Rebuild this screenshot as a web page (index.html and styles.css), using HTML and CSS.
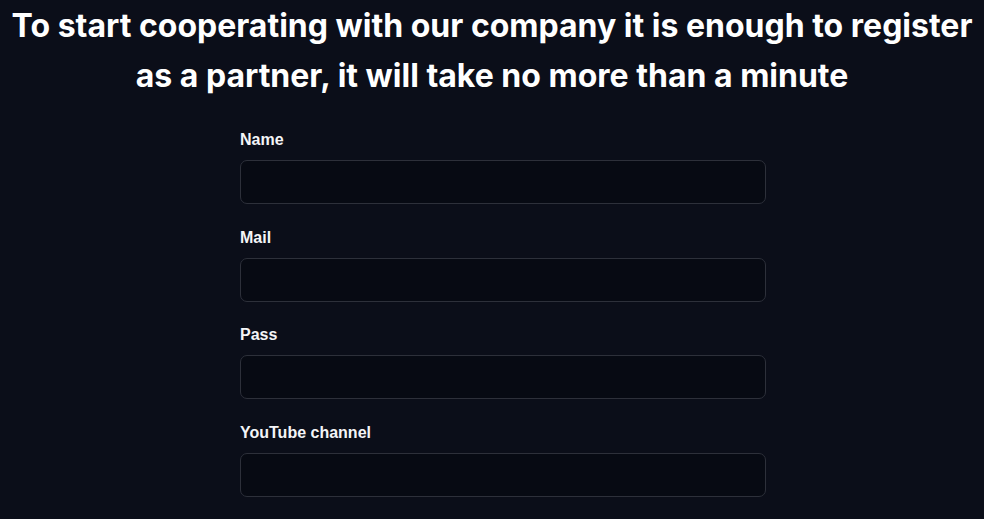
FILE: index.html
```html
<!DOCTYPE html>
<html lang="en">
<head>
<meta charset="utf-8">
<title>Register as a partner</title>
<link rel="stylesheet" href="styles.css">
</head>
<body>
<main class="page">
  <h1 class="title">To start cooperating with our company it is enough to register as a partner, it will take no more than a minute</h1>
  <form class="form">
    <label class="field">
      <span class="label">Name</span>
      <input class="input" type="text">
    </label>
    <label class="field">
      <span class="label">Mail</span>
      <input class="input" type="email">
    </label>
    <label class="field">
      <span class="label">Pass</span>
      <input class="input" type="password">
    </label>
    <label class="field">
      <span class="label">YouTube channel</span>
      <input class="input" type="text">
    </label>
  </form>
</main>
</body>
</html>
```

FILE: styles.css
```css
html, body {
  margin: 0;
  padding: 0;
  background: #0b0e19;
  color: #ffffff;
  overflow: hidden;
}
.page {
  display: flex;
  flex-direction: column;
  align-items: center;
}
.title {
  margin: 1px 0 0;
  font-family: Inter, "Noto Sans", sans-serif;
  font-weight: 700;
  font-size: 32px;
  line-height: 50px;
  text-align: center;
  width: 984px;
}
.form {
  width: 526px;
  display: flex;
  flex-direction: column;
  margin-top: 27px;
  margin-left: 22px;
  gap: 21.6px;
}
.field {
  display: flex;
  flex-direction: column;
  gap: 10px;
}
.label {
  font-family: "Liberation Sans", Arial, sans-serif;
  font-weight: 700;
  font-size: 16px;
  line-height: 20px;
  padding-top: 2px;
  color: #f4f5f7;
}
.input {
  box-sizing: border-box;
  height: 44px;
  width: 100%;
  background: #070a13;
  border: 1px solid #2d303a;
  border-radius: 7px;
  outline: none;
  color: #fff;
  padding: 0 12px;
}
```
